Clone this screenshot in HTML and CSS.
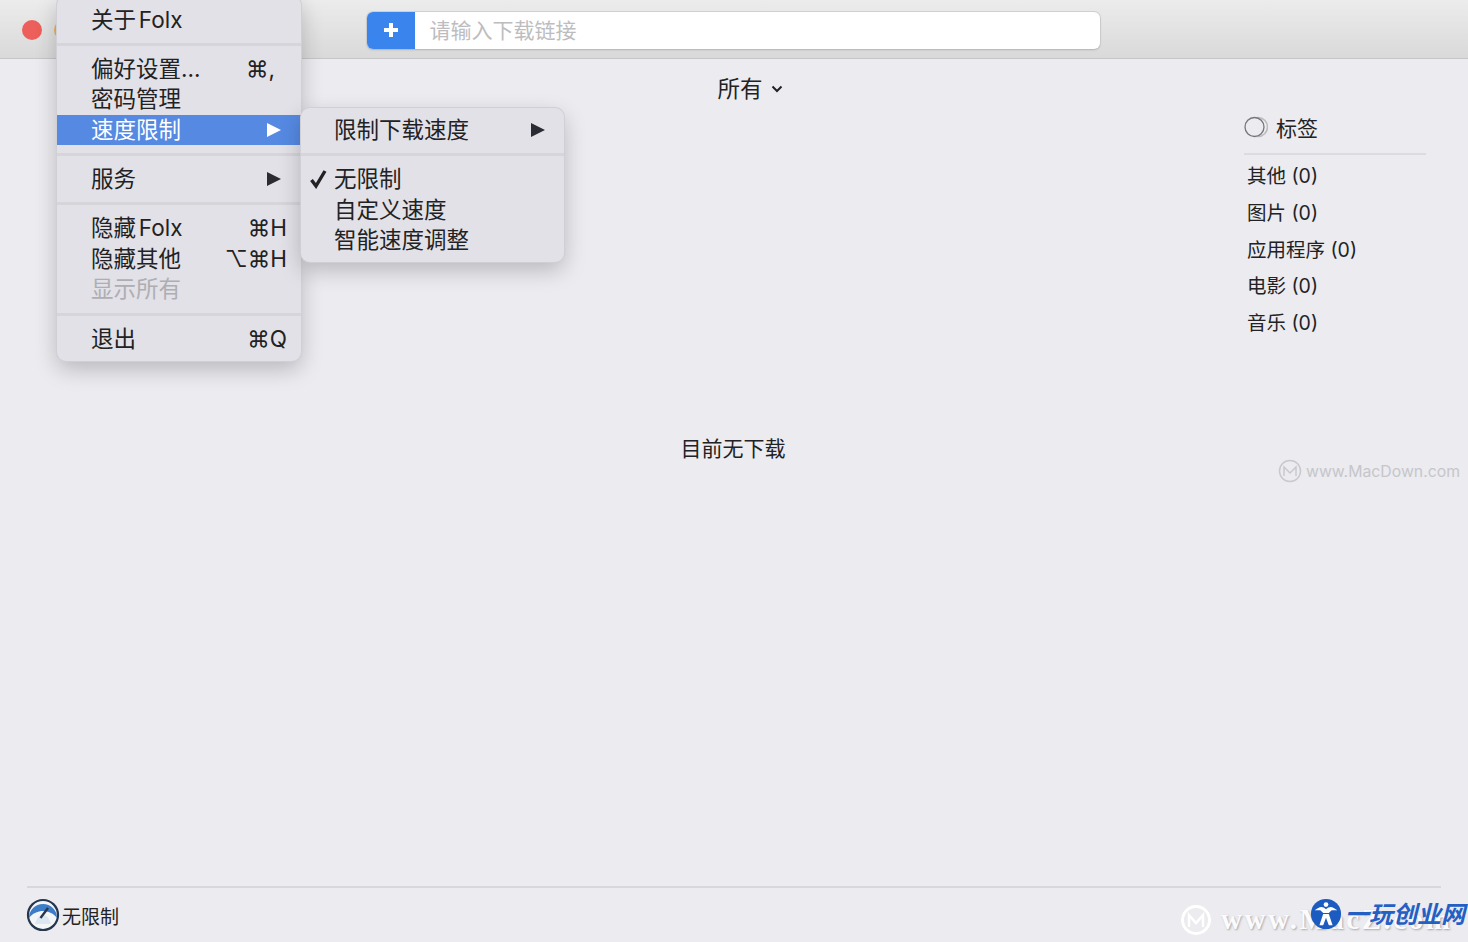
FILE: index.html

```html
<!DOCTYPE html>
<html>
<head>
  <meta charset="utf-8">
  <title>Folx</title>
  <link rel="stylesheet" href="styles.css">
</head>
<body>
  <div class="window">
    <header class="toolbar">
      <span class="dot dot-red"></span>
      <span class="dot dot-orange"></span>
      <div class="url-bar">
        <button class="add-btn">
          <svg width="18" height="18" viewBox="0 0 18 18"><path d="M9 2v14M2 9h14" stroke="#fff" stroke-width="4"/></svg>
        </button>
        <span class="url-hint">请输入下载链接</span>
      </div>
    </header>

    <main class="main">
      <div class="side-gap"></div>
      <section class="center">
        <div class="filter">所有
          <svg width="12" height="8" viewBox="0 0 12 8"><path d="M1.500 1.500L6 6l4.500-4.500" fill="none" stroke="#222224" stroke-width="2"/></svg>
        </div>
        <p class="empty">目前无下载</p>
      </section>
      <aside class="tags">
        <div class="tags-head">
          <svg width="24" height="22" viewBox="0 0 24 22">
            <circle cx="14" cy="11" r="9.500" fill="none" stroke="#bcbcbf" stroke-width="1.600"/>
            <circle cx="10.500" cy="11" r="9.500" fill="#ebebf0" stroke="#77777a" stroke-width="1.300"/>
          </svg>
          <span>标签</span>
        </div>
        <ul class="tag-list">
          <li>其他 (0)</li>
          <li>图片 (0)</li>
          <li>应用程序 (0)</li>
          <li>电影 (0)</li>
          <li>音乐 (0)</li>
        </ul>
      </aside>
    </main>

    <footer class="status">
      <svg class="gauge" width="34" height="34" viewBox="0 0 34 34">
        <circle cx="17" cy="17" r="15" fill="#f4f5f7" stroke="#26364c" stroke-width="2.200"/>
        <path d="M3 20A14 14 0 1 1 31 20C27 15 22 13 17 13C12 13 7 15 3 20z" fill="#3d7cc6"/>
        <path d="M9 26C11 19 14 17 17 17C20 17 23 19 25 26z" fill="#dbe6f1"/>
        <path d="M14.500 20L22 10" stroke="#26364c" stroke-width="2.400"/>
      </svg>
      <span>无限制</span>
    </footer>

    <div class="menu app-menu">
      <div class="row">关于 Folx</div>
      <div class="sep"></div>
      <div class="row">偏好设置...<span class="key key-comma">⌘,</span></div>
      <div class="row">密码管理</div>
      <div class="row active">速度限制
        <svg class="arrow" width="14" height="16" viewBox="0 0 14 16"><path d="M0 1l14 7-14 7z" fill="#fff"/></svg>
      </div>
      <div class="sep"></div>
      <div class="row">服务
        <svg class="arrow" width="14" height="16" viewBox="0 0 14 16"><path d="M0 1l14 7-14 7z" fill="#2b2b33"/></svg>
      </div>
      <div class="sep"></div>
      <div class="row">隐藏 Folx<span class="key">⌘H</span></div>
      <div class="row">隐藏其他<span class="key">⌥⌘H</span></div>
      <div class="row off">显示所有</div>
      <div class="sep"></div>
      <div class="row">退出<span class="key">⌘Q</span></div>
    </div>

    <div class="menu sub-menu">
      <div class="row">限制下载速度
        <svg class="arrow" width="14" height="16" viewBox="0 0 14 16"><path d="M0 1l14 7-14 7z" fill="#2b2b33"/></svg>
      </div>
      <div class="sep"></div>
      <div class="row">
        <svg class="check" width="18" height="20" viewBox="0 0 18 20"><path d="M2.500 11l4.500 6L16 2" fill="none" stroke="#222224" stroke-width="3.400"/></svg>
        无限制
      </div>
      <div class="row">自定义速度</div>
      <div class="row">智能速度调整</div>
    </div>

    <div class="mark-mac">
      <svg width="24" height="24" viewBox="0 0 24 24">
        <circle cx="12" cy="12" r="10.500" fill="none" stroke="#c9c9cd" stroke-width="1.500"/>
        <path d="M6 17V8l6 6 6-6v9" fill="none" stroke="#c9c9cd" stroke-width="1.500"/>
      </svg>
      <span>www.MacDown.com</span>
    </div>

    <div class="mark-bottom">
      <svg width="32" height="32" viewBox="0 0 32 32">
        <circle cx="16" cy="16" r="13.500" fill="none" stroke="#fff" stroke-width="3"/>
        <path d="M9 23V11l7 8 7-8v12" fill="none" stroke="#fff" stroke-width="2.500"/>
      </svg>
      <span>www.MacZ.com</span>
    </div>

    <div class="mark-yiwan">
      <svg width="32" height="32" viewBox="0 0 34 34">
        <circle cx="17" cy="17" r="16" fill="#1c5cc0"/>
        <path d="M5 13C10 9 13 8 17 12C21 8 24 9 29 13L23 13L20 16H14L11 13z" fill="#fff"/>
        <circle cx="17" cy="7" r="2.500" fill="#fff"/>
        <path d="M14 17H20L24 29H20L17 21L14 29H10z" fill="#fff"/>
      </svg>
      <span>一玩创业网</span>
    </div>
  </div>
</body>
</html>
```

FILE: styles.css

```css
html, body { margin: 0; padding: 0; height: 100%; overflow: hidden; }
body {
  font-family: Inter, "Noto Sans CJK SC", "DejaVu Sans", sans-serif;
  color: #222224;
  background: #ebebf0;
}
.window { position: relative; height: 942px; display: flex; flex-direction: column; overflow: hidden; }

/* toolbar */
.toolbar {
  height: 59px;
  box-sizing: border-box;
  display: flex;
  align-items: center;
  padding-left: 22px;
  background: linear-gradient(#ececec, #d9d9d9);
  border-bottom: 1px solid #c6c6c8;
}
.dot { width: 20px; height: 20px; border-radius: 50%; margin-right: 12px; margin-top: 1px; flex: none; }
.dot-red { background: #ec5f5a; }
.dot-orange { background: #efb04e; }
.url-bar {
  margin-left: 281px;
  width: 733px;
  height: 37px;
  margin-top: 2px;
  display: flex;
  align-items: center;
  box-sizing: border-box;
  background: #fff;
  border-radius: 6px;
  box-shadow: 0 1px 2px #b5b5b7, 0 0 0 1px #d2d2d4;
  overflow: hidden;
}
.add-btn {
  width: 48px;
  height: 100%;
  border: none;
  padding: 0;
  display: flex;
  align-items: center;
  justify-content: center;
  background: #3a84ee;
}
.url-hint { margin: -2px 0 0 14.500px; font-size: 21px; color: #bdbdbf; }

/* main area */
.main { flex: 1; display: grid; grid-template-columns: 224px 1fr 224px; }
.center { display: flex; flex-direction: column; align-items: center; }
.filter {
  margin-top: 14px;
  margin-left: 32px;
  line-height: 32px;
  font-size: 22.500px;
  display: flex;
  align-items: center;
  gap: 8px;
}
.empty { margin: 329px 2px 0 0; font-size: 21px; line-height: 30px; }

.tags { width: 182px; padding-top: 48px; }
.tags-head {
  height: 40px;
  padding-bottom: 6px;
  display: flex;
  align-items: center;
  gap: 8px;
  font-size: 21px;
  border-bottom: 2px solid #dcdce0;
}
.tag-list { list-style: none; margin: 3px 0 0; padding: 0 0 0 3px; font-size: 19.500px; }
.tag-list li { height: 36.800px; line-height: 36.800px; white-space: nowrap; }

.status {
  height: 56px;
  box-sizing: border-box;
  margin: 0 27px;
  display: flex;
  align-items: center;
  gap: 2px;
  font-size: 19px;
  border-top: 2px solid #d8d8dc;
}
.gauge { margin-left: -1px; }

/* menus */
.menu {
  position: absolute;
  box-sizing: border-box;
  background: #e1e1e7;
  border-radius: 9px;
  box-shadow: 0 0 0 1px #cfcfd4, 0 8px 22px rgba(0, 0, 0, 0.22);
  font-size: 22.500px;
  word-spacing: -3.500px;
}
.app-menu { left: 57px; top: -4px; width: 244px; padding: 8.500px 0 6.500px; z-index: 2; }
.sub-menu { left: 301px; top: 108px; width: 263px; padding: 7px 0 6px; z-index: 3; }
.row {
  position: relative;
  height: 30.400px;
  line-height: 30.400px;
  padding-left: 34px;
  white-space: nowrap;
}
.sub-menu .row { padding-left: 33px; }
.sub-menu .arrow { right: 19px; }
.row.active { background: #5589e2; color: #fff; }
.row.off { color: #aeaeb2; }
.sep { height: 3px; margin: 8px 0; background: #d5d5da; }
.key { position: absolute; right: 14px; top: 0; }
.key-comma { right: 26px; }
.arrow { position: absolute; right: 20px; top: 7px; }
.check { position: absolute; left: 8px; top: 5px; }

/* watermarks */
.mark-mac {
  position: absolute;
  left: 1278px;
  top: 459px;
  display: flex;
  align-items: center;
  gap: 4px;
  font-size: 15.800px;
  color: #c6c6ca;
  white-space: nowrap;
}
.mark-bottom {
  position: absolute;
  left: 1180px;
  top: 903px;
  display: flex;
  align-items: center;
  gap: 9px;
  font-family: "Liberation Serif", serif;
  font-weight: bold;
  font-size: 29px;
  letter-spacing: 2.500px;
  color: #fbfbfc;
  text-shadow: 1px 1px 2px #a6a6aa;
  white-space: nowrap;
}
.mark-yiwan {
  position: absolute;
  left: 1310px;
  top: 898px;
  display: flex;
  align-items: center;
  gap: 3px;
  font-weight: bold;
  font-size: 24px;
  color: #2460c4;
  white-space: nowrap;
}
.mark-yiwan span { font-style: italic; margin-top: -3px; }
```
